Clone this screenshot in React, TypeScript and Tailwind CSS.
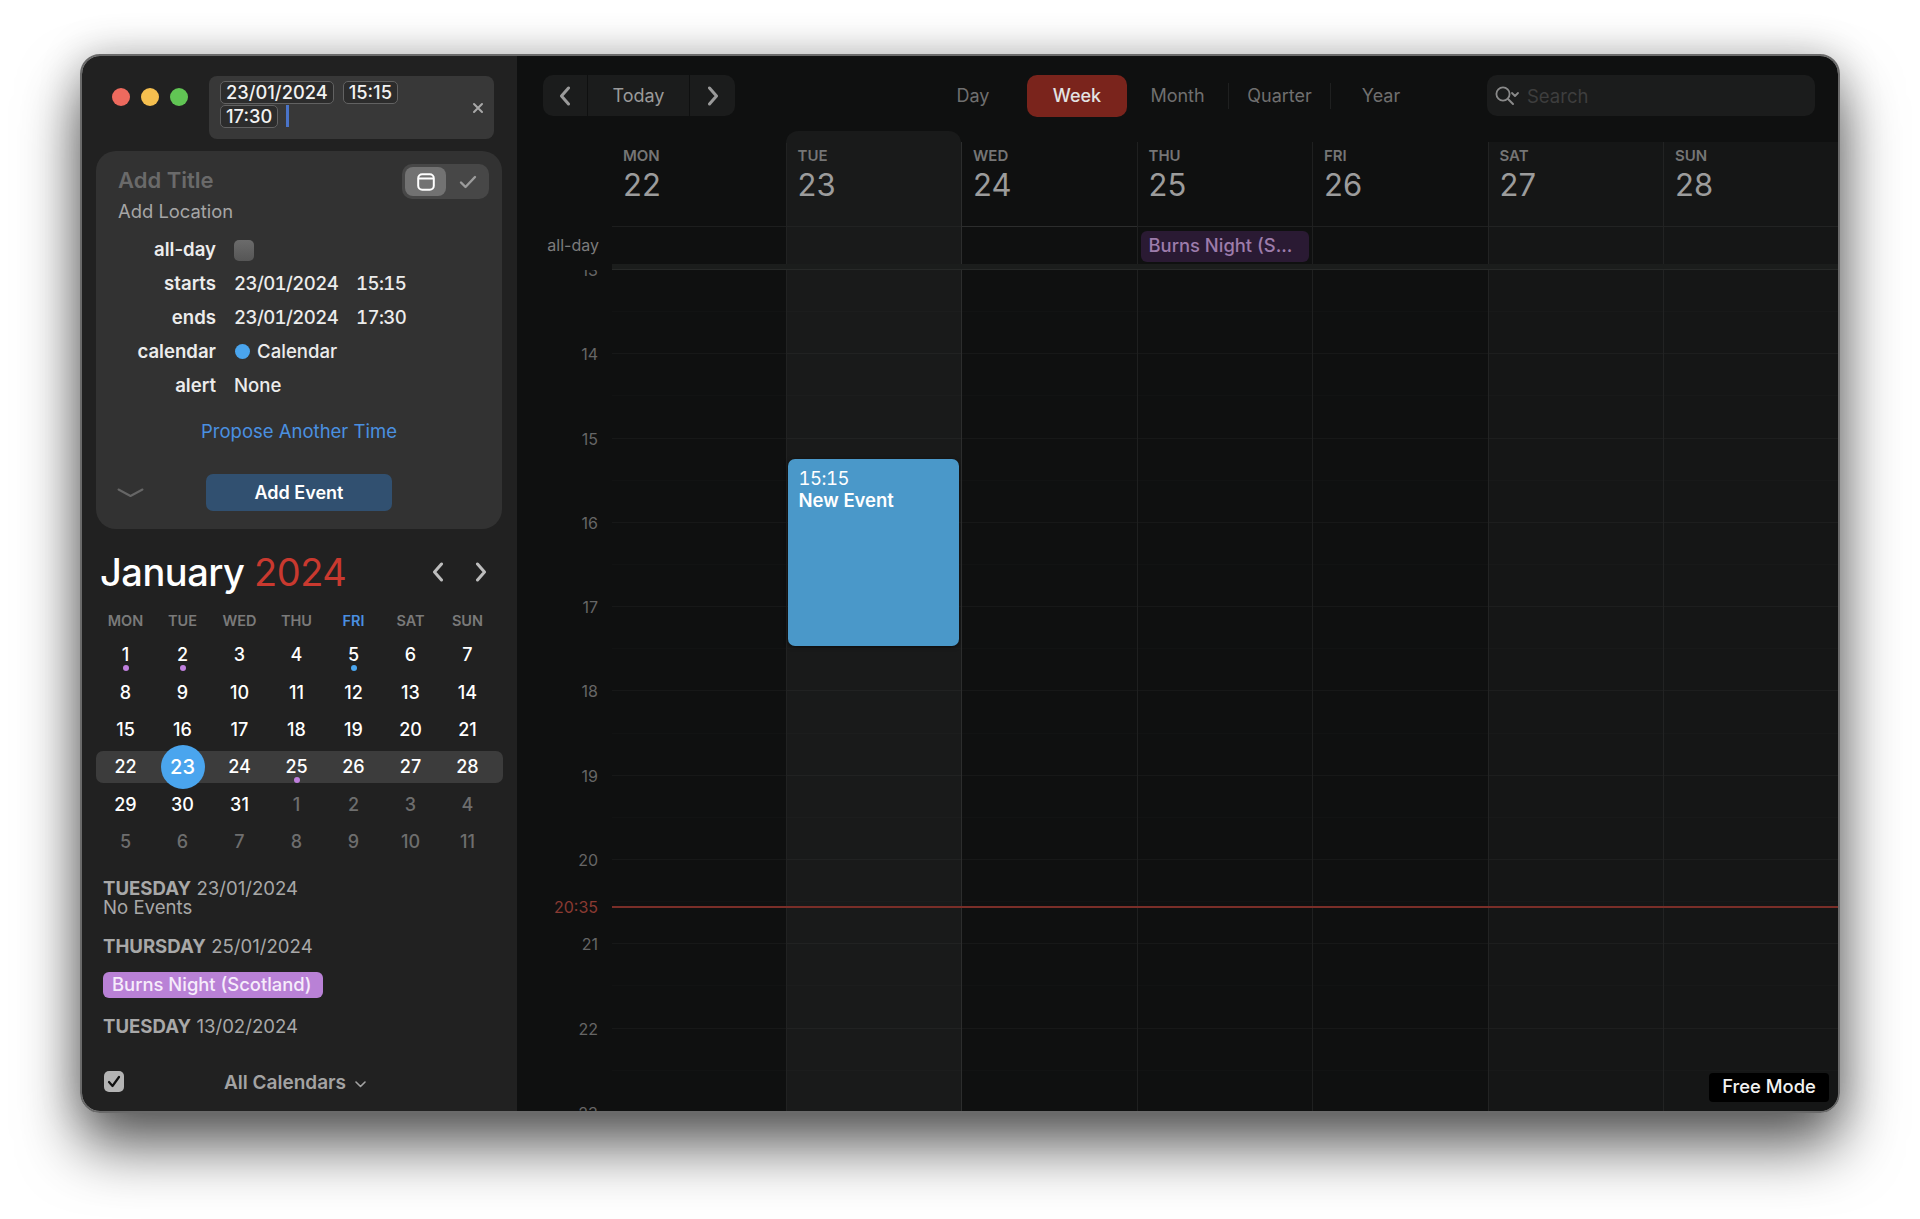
const FONT = "font-['Inter','Liberation_Sans',sans-serif]";

const weekdays = ["MON", "TUE", "WED", "THU", "FRI", "SAT", "SUN"];

type Day = { n: number; muted?: boolean; dot?: string; today?: boolean };

const weeks: Day[][] = [
  [{ n: 1, dot: "bg-[#bf7fdc]" }, { n: 2, dot: "bg-[#bf7fdc]" }, { n: 3 }, { n: 4 }, { n: 5, dot: "bg-[#4aa5ee]" }, { n: 6 }, { n: 7 }],
  [{ n: 8 }, { n: 9 }, { n: 10 }, { n: 11 }, { n: 12 }, { n: 13 }, { n: 14 }],
  [{ n: 15 }, { n: 16 }, { n: 17 }, { n: 18 }, { n: 19 }, { n: 20 }, { n: 21 }],
  [{ n: 22 }, { n: 23, today: true }, { n: 24 }, { n: 25, dot: "bg-[#bf7fdc]" }, { n: 26 }, { n: 27 }, { n: 28 }],
  [{ n: 29 }, { n: 30 }, { n: 31 }, { n: 1, muted: true }, { n: 2, muted: true }, { n: 3, muted: true }, { n: 4, muted: true }],
  [{ n: 5, muted: true }, { n: 6, muted: true }, { n: 7, muted: true }, { n: 8, muted: true }, { n: 9, muted: true }, { n: 10, muted: true }, { n: 11, muted: true }],
];

const weekCols = [
  { name: "MON", day: 22, bg: "bg-[#0f1010]", line: "", width: "w-[173.5px]" },
  { name: "TUE", day: 23, bg: "bg-[#191a1a]", line: "border-l border-[#212222]", width: "w-[175.5px]" },
  { name: "WED", day: 24, bg: "bg-[#0f1010]", line: "border-l border-[#2c2d2d]", width: "w-[175.5px]" },
  { name: "THU", day: 25, bg: "bg-[#0f1010]", line: "border-l border-[#1f2020]", width: "w-[175.5px]" },
  { name: "FRI", day: 26, bg: "bg-[#0f1010]", line: "border-l border-[#1f2020]", width: "w-[175.5px]" },
  { name: "SAT", day: 27, bg: "bg-[#151616]", line: "border-l border-[#222323]", width: "w-[175.5px]" },
  { name: "SUN", day: 28, bg: "bg-[#151616]", line: "border-l border-[#222323]", width: "w-[175.5px]" },
];

const hours = [13, 14, 15, 16, 17, 18, 19, 20, 21, 22, 23];

function Token({ children }: { children: React.ReactNode }) {
  return (
    <span className="h-[23px] px-[5px] rounded-[5px] border border-[#626262] bg-[#2c2c2c] text-[18.3px] leading-[21px] text-[#f2f2f2] font-medium">
      {children}
    </span>
  );
}

function Field({ label, children }: { label: string; children: React.ReactNode }) {
  return (
    <div className="h-[34px] flex items-center text-[18.6px]">
      <div className="w-[120px] text-right font-semibold text-[#ececec]">{label}</div>
      <div className="ml-[18px] flex items-center text-[#ececec] font-medium">{children}</div>
    </div>
  );
}

function Chevron({ dir, className }: { dir: "left" | "right"; className?: string }) {
  return (
    <svg width="12" height="20" viewBox="0 0 12 20" fill="none" className={className}>
      <path
        d={dir === "left" ? "M9.5 2 2.5 10l7 8" : "M2.5 2l7 8-7 8"}
        stroke="currentColor"
        strokeWidth="3"
        strokeLinecap="round"
        strokeLinejoin="round"
      />
    </svg>
  );
}

function DayCell({ day }: { day: Day }) {
  return (
    <div className="relative h-full flex items-center justify-center">
      {day.today ? (
        <span className="shrink-0 w-[44px] h-[44px] rounded-full bg-[#4aa5ee] text-white flex items-center justify-center text-[20px]">
          {day.n}
        </span>
      ) : (
        <span className={day.muted ? "text-[#6e6e6e]" : "text-white"}>{day.n}</span>
      )}
      {day.dot && <span className={`absolute left-1/2 -translate-x-1/2 top-[calc(50%+10px)] w-[6px] h-[6px] rounded-full ${day.dot}`} />}
    </div>
  );
}

function Sidebar() {
  return (
    <aside className="w-[435px] shrink-0 pl-px bg-[#212121]">
      <div className="pt-[20px] flex">
        <div className="pl-[29px] pt-[12px] flex gap-[11px]">
          <span className="w-[18px] h-[18px] rounded-full bg-[#ed6a5e]" />
          <span className="w-[18px] h-[18px] rounded-full bg-[#f5bf4f]" />
          <span className="w-[18px] h-[18px] rounded-full bg-[#61c554]" />
        </div>
        <div className="relative ml-[21px] w-[285px] h-[63px] rounded-[8px] bg-[#383838] pl-[11px] pt-[5px]">
          <div className="w-[210px] flex flex-wrap gap-x-[9px] gap-y-[1px]">
            <Token>23/01/2024</Token>
            <Token>15:15</Token>
            <Token>17:30</Token>
            <span className="-ml-[1px] w-[3px] h-[22px] bg-[#4a74c9]" />
          </div>
          <svg width="12" height="12" viewBox="0 0 12 12" className="absolute right-[10px] top-[26px] text-[#a8a8a8]" fill="none">
            <path d="M2 2l8 8M10 2l-8 8" stroke="currentColor" strokeWidth="2" strokeLinecap="round" />
          </svg>
        </div>
      </div>

      <section className="mt-[12px] ml-[13px] w-[406px] h-[378px] rounded-[20px] bg-[#323232] pt-[13px]">
        <div className="flex items-start justify-between pl-[22px] pr-[13px]">
          <div>
            <div className="text-[22px] leading-[32px] font-semibold text-[#6a6a6a]">Add Title</div>
            <div className="mt-[3px] text-[18.4px] leading-[24px] text-[#a6a6a6]">Add Location</div>
          </div>
          <div className="w-[87px] h-[35px] rounded-[10px] bg-[#474747] flex items-center pl-[3px]">
            <div className="w-[41px] h-[29px] rounded-[8px] bg-[#727272] flex items-center justify-center">
              <svg width="18" height="18" viewBox="0 0 18 18" fill="none" stroke="#fff">
                <rect x="1.2" y="1.2" width="15.6" height="15.6" rx="4" strokeWidth="2" />
                <path d="M1.5 5.5h15" strokeWidth="2" />
              </svg>
            </div>
            <div className="flex-1 flex justify-center">
              <svg width="18" height="14" viewBox="0 0 18 14" fill="none">
                <path d="M2 7.5l4.5 4.5L16 2" stroke="#9c9c9c" strokeWidth="2.4" strokeLinecap="round" strokeLinejoin="round" />
              </svg>
            </div>
          </div>
        </div>

        <div className="mt-[10px]">
          <Field label="all-day">
            <span className="w-[20px] h-[21px] rounded-[5px] bg-gradient-to-b from-[#6b6b6b] to-[#565656]" />
          </Field>
          <Field label="starts">
            <span className="w-[122px] tabular-nums tracking-[-0.6px]">23/01/2024</span>
            <span className="tabular-nums tracking-[-0.6px]">15:15</span>
          </Field>
          <Field label="ends">
            <span className="w-[122px] tabular-nums tracking-[-0.6px]">23/01/2024</span>
            <span className="tabular-nums tracking-[-0.6px]">17:30</span>
          </Field>
          <Field label="calendar">
            <span className="w-[15px] h-[15px] rounded-full bg-[#4aa5ee] ml-[1px] mr-[7px]" />
            <span>Calendar</span>
          </Field>
          <Field label="alert">None</Field>
        </div>

        <div className="mt-[16px] text-center text-[18.5px] leading-[24px] text-[#4a90e0]">Propose Another Time</div>

        <div className="mt-[31px] grid grid-cols-[110px_186px] items-center">
          <svg width="27" height="10" viewBox="0 0 27 10" fill="none" className="ml-[21px]">
            <path d="M1.5 1.5 13.5 8l12-6.5" stroke="#666" strokeWidth="2" strokeLinecap="round" strokeLinejoin="round" />
          </svg>
          <div className="h-[37px] rounded-[7px] bg-[#315070] flex items-center justify-center text-[18px] font-semibold text-white">
            Add Event
          </div>
        </div>
      </section>

      <div className="mt-[19px] pl-[17px] pr-[30px] h-[48px] flex items-center justify-between">
        <div className="text-[38px] font-medium text-white tracking-[-0.5px]">
          January <span className="font-normal text-[#c9392f]">2024</span>
        </div>
        <div className="flex gap-[31px] text-[#bdbdbd]">
          <Chevron dir="left" />
          <Chevron dir="right" />
        </div>
      </div>

      <div className="mt-[14px] ml-[14px] w-[399px] h-[20px] grid grid-cols-7 items-center text-center text-[14.5px] font-semibold text-[#7a7a7a]">
        {weekdays.map((d) => (
          <div key={d} className={d === "FRI" ? "text-[#4a8fe0]" : ""}>
            {d}
          </div>
        ))}
      </div>

      <div className="mt-[6px] ml-[13px] w-[407px] text-[18px] font-medium">
        {weeks.map((w) => (
          <div key={w[0].n + "-" + w[6].n} className="h-[37.4px] flex items-center">
            <div className={"w-full h-[32px] grid grid-rows-[32px] grid-cols-[1px_repeat(7,57px)] rounded-[7px] " + (w[0].n === 22 ? "bg-[#3c3c3c]" : "")}>
              <div />
              {w.map((d, i) => (
                <DayCell key={i} day={d} />
              ))}
            </div>
          </div>
        ))}
      </div>

      <div className="mt-[17.6px] ml-[20px] text-[18.6px] text-[#a8a8a8]">
        <div className="leading-[20px]">
          <b className="font-bold">TUESDAY</b> 23/01/2024
        </div>
        <div className="leading-[19px]">No Events</div>
        <div className="mt-[19px] leading-[20px]">
          <b className="font-bold">THURSDAY</b> 25/01/2024
        </div>
        <div className="mt-[16px] w-[220px] h-[26px] rounded-[6px] bg-[#b981d6] pl-[9px] text-[18.4px] leading-[25px] font-medium text-[#f6ecfb]">
          Burns Night (Scotland)
        </div>
        <div className="mt-[18px] leading-[20px]">
          <b className="font-bold">TUESDAY</b> 13/02/2024
        </div>
      </div>

      <div className="mt-[33px] ml-[21px] flex items-center">
        <span className="w-[20px] h-[21px] mb-[3px] rounded-[5px] bg-[#b4b4b4] flex items-center justify-center">
          <svg width="14" height="13" viewBox="0 0 14 13" fill="none">
            <path d="M2 7l3.5 4L12 2" stroke="#111" strokeWidth="2.2" strokeLinecap="round" strokeLinejoin="round" />
          </svg>
        </span>
        <span className="ml-[100px] text-[19px] font-semibold text-[#a3a3a3]">All Calendars</span>
        <svg width="11" height="7" viewBox="0 0 11 7" fill="none" className="ml-[9px] mt-[3px]">
          <path d="M1 1l4.5 4.5L10 1" stroke="#a3a3a3" strokeWidth="1.6" strokeLinecap="round" strokeLinejoin="round" />
        </svg>
      </div>
    </aside>
  );
}

function Toolbar() {
  return (
    <div className="h-[86px] pt-[19px] pl-[26px] flex items-start text-[18px] text-[#6f6f6f]">
      <div className="w-[192px] h-[41px] rounded-[10px] bg-[#1b1c1c] flex items-center text-[#9a9a9a]">
        <div className="w-[44px] flex justify-center">
          <Chevron dir="left" />
        </div>
        <div className="w-[103px] h-full flex items-center justify-center border-x border-[#0f1010]">Today</div>
        <div className="w-[45px] flex justify-center">
          <Chevron dir="right" />
        </div>
      </div>

      <div className="ml-[211px] flex items-center h-[41px]">
        <div className="w-[54px] mr-[27px] text-center">Day</div>
        <div className="w-[100px] h-[42px] rounded-[10px] bg-[#7a241c] flex items-center justify-center font-medium text-[#e3e3e3]">Week</div>
        <div className="w-[101px] text-center">Month</div>
        <div className="w-px h-[26px] bg-[#1f2020]" />
        <div className="w-[101px] text-center">Quarter</div>
        <div className="w-px h-[26px] bg-[#1f2020]" />
        <div className="w-[100px] text-center">Year</div>
      </div>

      <div className="ml-[56px] w-[328px] h-[41px] rounded-[10px] bg-[#1b1c1c] flex items-center pl-[7px]">
        <svg width="26" height="22" viewBox="0 0 26 22" fill="none" stroke="#8a8a8a" strokeLinecap="round" strokeLinejoin="round">
          <circle cx="9" cy="9" r="6.6" strokeWidth="1.8" />
          <path d="M14 14l5 5" strokeWidth="2" />
          <path d="M18 8l3 3 3-3" strokeWidth="1.8" />
        </svg>
        <span className="ml-[7px] mt-[2px] text-[18.5px] text-[#3e3e3e]">Search</span>
      </div>
    </div>
  );
}

function WeekGrid() {
  return (
    <div className="relative flex-1 min-h-0 flex flex-col">
      <div className="h-[85px] shrink-0 grid grid-cols-[95px_173.5px_repeat(6,175.5px)]">
        <div />
        {weekCols.map((c) => (
          <div key={c.name} className={`pl-[11px] pt-[6px] border-b border-[#1d1e1e] ${c.bg} ${c.line}`}>
            <div className="text-[15px] leading-[16px] font-semibold text-[#757575]">{c.name}</div>
            <div className="mt-[3px] text-[31px] leading-[36px] text-[#9c9c9c]">{c.day}</div>
          </div>
        ))}
      </div>

      <div className="h-[37px] shrink-0 grid grid-cols-[95px_173.5px_repeat(6,175.5px)]">
        <div className="pr-[13px] text-right text-[16px] leading-[36px] text-[#7c7c7c]">all-day</div>
        {weekCols.map((c) => (
          <div key={c.name} className={`relative ${c.bg} ${c.line}`}>
            {c.name === "THU" && (
              <div className="absolute left-[3px] top-[4px] w-[168px] h-[31px] rounded-[6px] bg-[#2a1a33] pl-[8px] text-[18.4px] leading-[29px] font-medium text-[#9d7cab] whitespace-nowrap">
                Burns Night (S...
              </div>
            )}
          </div>
        ))}
      </div>

      <div className="h-[6px] shrink-0 ml-[95px] bg-[#1b1d1c] border-b border-[#272928]" />

      <div className="relative flex-1 min-h-0 overflow-hidden flex">
        <div className="w-[95px] shrink-0 -mt-[10px] pr-[14px] text-right text-[16px] text-[#666]">
          {hours.map((h) => (
            <div key={h} className="h-[84.3px] leading-[20px]">
              {h}
            </div>
          ))}
        </div>

        {weekCols.map((c) => (
          <div key={c.name} className={`relative ${c.width} shrink-0 ${c.bg} ${c.line}`}>
            {Array.from({ length: 22 }, (_, i) => (
              <div key={i} className={"h-[42.15px] border-b " + (i % 2 ? "border-white/[0.035]" : "border-white/[0.015]")} />
            ))}
            {c.name === "TUE" && (
              <div className="absolute left-[1px] top-[189px] w-[171px] h-[187px] rounded-[7px] bg-[#4a98c9] pl-[11px] pt-[8px] text-[18.5px] leading-[22px] text-white shadow-[0_1px_4px_rgba(0,0,0,0.6)]">
                <div className="tabular-nums tracking-[-0.5px]">15:15</div>
                <div className="font-semibold">New Event</div>
              </div>
            )}
          </div>
        ))}

        <div className="absolute left-[95px] right-0 top-[636px] h-[2px] bg-[#7a2e28]" />
        <div className="absolute left-0 w-[81px] top-[627px] text-right text-[16px] leading-[20px] text-[#8a3a32] bg-[#0f1010]">20:35</div>
      </div>

      <div className="absolute right-[9px] bottom-[9px] w-[120px] h-[29px] rounded-[4px] bg-black flex items-center justify-center text-[18.4px] font-medium text-[#f2f2f2] pb-[2px]">
        Free Mode
      </div>
    </div>
  );
}

export default function App() {
  return (
    <div className={`${FONT} w-[1920px] h-[1219px] overflow-hidden bg-white pl-[80px] pt-[54px]`}>
      <div className="w-[1760px] h-[1059px] flex rounded-[20px] overflow-hidden border-2 border-[#6a6a6a] shadow-[0_34px_60px_rgba(0,0,0,0.62),0_0_40px_rgba(0,0,0,0.22)]">
        <Sidebar />
        <main className="relative flex-1 min-w-0 flex flex-col bg-[#0f1010]">
          <Toolbar />
          <WeekGrid />
          <div className="absolute left-[268.5px] top-[75px] w-[175.5px] h-[12px] rounded-t-[12px] bg-[#191a1a]" />
        </main>
      </div>
    </div>
  );
}
